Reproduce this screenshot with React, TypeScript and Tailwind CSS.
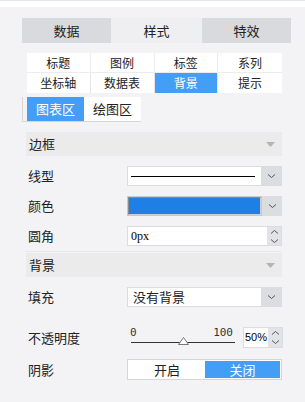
import React from "react";

const cjk = { fontFamily: '"Noto Sans CJK SC", "Noto Sans", sans-serif' };

const Chevron = () => (
    <svg width="9" height="6" viewBox="0 0 9 6" fill="none">
        <path d="M1 1.5 L4.5 4.5 L8 1.5" stroke="#555" strokeWidth="1" />
    </svg>
);

const Spinner = () => (
    <div className="flex flex-col items-center justify-center gap-[3px] w-[14px] h-full bg-[#e2e3e6]">
        <svg width="9" height="6" viewBox="0 0 9 6" fill="none">
            <path d="M1 4.5 L4.5 1.5 L8 4.5" stroke="#555" strokeWidth="1" />
        </svg>
        <svg width="9" height="6" viewBox="0 0 9 6" fill="none">
            <path d="M1 1.5 L4.5 4.5 L8 1.5" stroke="#555" strokeWidth="1" />
        </svg>
    </div>
);

function SectionHeader({ title }: { title: string }) {
    return (
        <div className="ml-[26px] w-[256px] h-[24px] bg-[#ebebec] flex items-center justify-between pl-[3px] pr-[7px]">
            <span className="text-[13px] text-[#222]">{title}</span>
            <svg width="9" height="5" viewBox="0 0 9 5">
                <path d="M0 0 L9 0 L4.5 5 Z" fill="#b4b4b6" />
            </svg>
        </div>
    );
}

function Row({ label, children, className = "" }: { label: string; children: React.ReactNode; className?: string }) {
    return (
        <div className={`flex items-center ml-[28px] ${className}`}>
            <span className="w-[99px] text-[13px] text-[#222]">{label}</span>
            {children}
        </div>
    );
}

function SelectBox({ children }: { children: React.ReactNode }) {
    return (
        <div className="flex w-[155px] h-[20px] border border-[#dcdcdf] bg-white">
            <div className="flex-1 flex items-center overflow-hidden">{children}</div>
            <div className="w-[20px] bg-[#dcdde0] flex items-center justify-center">
                <Chevron />
            </div>
        </div>
    );
}

const subTabs = ["标题", "图例", "标签", "系列", "坐标轴", "数据表", "背景", "提示"];

export default function App() {
    return (
        <div className="w-[305px] h-[402px] bg-[#f3f3f5] overflow-hidden" style={cjk}>
            <div className="h-[7px] bg-white border-t border-[#e2e7ee]" />

            {/* main tabs */}
            <div className="mt-[11px] ml-[22px] w-[269px] h-[25px] flex text-[13px] text-[#222]">
                <div className="w-[89px] bg-[#d9dadd] flex items-center justify-center">数据</div>
                <div className="w-[91px] bg-[#efeff1] flex items-center justify-center">样式</div>
                <div className="w-[89px] bg-[#d9dadd] flex items-center justify-center">特效</div>
            </div>

            {/* sub tabs */}
            <div className="mt-[10px] ml-[27px] w-[255px] grid grid-cols-4 text-[12px] text-[#222]">
                {subTabs.map((t, i) => (
                    <div
                        key={t}
                        className={`h-[20px] flex items-center justify-center ${i % 4 !== 3 ? "border-r border-[#e6e6e8]" : ""} ${
                            i < 4 ? "border-b border-[#ececee]" : ""
                        } ${t === "背景" ? "bg-[#459ef5] text-white" : "bg-white"}`}
                    >
                        {t}
                    </div>
                ))}
            </div>

            {/* area tabs */}
            <div className="mt-[4px] ml-[22px] w-[119px] h-[25px] flex border-l border-b border-[#d6d6d8] pl-[4px] text-[13px]">
                <div className="w-[57px] bg-[#459ef5] text-white flex items-center justify-center">图表区</div>
                <div className="w-[57px] bg-white text-[#222] flex items-center justify-center">绘图区</div>
            </div>

            <div className="mt-[10px]">
                <SectionHeader title="边框" />
            </div>

            <Row label="线型" className="mt-[10px]">
                <SelectBox>
                    <div className="ml-[3px] w-[124px] h-px bg-black" />
                </SelectBox>
            </Row>

            <Row label="颜色" className="mt-[10px]">
                <div className="flex w-[155px] h-[20px] bg-[#dcdde0]">
                    <div className="flex-1 p-px bg-[#c9c9cc]">
                        <div className="w-full h-full bg-[#1e80e6] border border-[#8a8a8c] border-b-[#d0d0d2] border-r-[#d0d0d2]" />
                    </div>
                    <div className="w-[20px] flex items-center justify-center">
                        <Chevron />
                    </div>
                </div>
            </Row>

            <Row label="圆角" className="mt-[10px]">
                <div className="flex w-[155px] h-[20px] border border-[#dcdcdf] bg-white">
                    <div
                        className="flex-1 flex items-center pl-[3px] text-[12px] text-black"
                        style={{ fontFamily: '"Liberation Serif", serif' }}
                    >
                        0px
                    </div>
                    <Spinner />
                </div>
            </Row>

            <div className="mt-[5px] ml-[26px] w-[256px] h-px bg-[#e8e8ea]" />

            <div className="mt-px">
                <SectionHeader title="背景" />
            </div>

            <Row label="填充" className="mt-[10px]">
                <SelectBox>
                    <span className="pl-[5px] text-[13px] text-[#222]">没有背景</span>
                </SelectBox>
            </Row>

            <Row label="不透明度" className="mt-[20px]">
                <div className="flex items-center">
                    <div className="relative w-[108px] h-[21px]">
                        <div
                            className="flex justify-between pl-[3px] pr-[2px] text-[11px] leading-none text-[#333]"
                            style={{ fontFamily: '"DejaVu Sans Mono", monospace' }}
                        >
                            <span>0</span>
                            <span>100</span>
                        </div>
                        <div className="absolute left-[4px] right-0 top-[15px] h-px bg-[#333]" />
                        <svg className="absolute left-[51px] top-[10px]" width="11" height="8" viewBox="0 0 11 8">
                            <path d="M5.5 0.5 L10.5 7.5 L0.5 7.5 Z" fill="#fff" stroke="#777" strokeWidth="1" />
                        </svg>
                    </div>
                    <div className="ml-[8px] flex h-[21px] border border-[#dcdcdf] bg-white">
                        <div className="w-[24px] flex items-center justify-center text-[11px] text-black" style={{ fontFamily: '"Liberation Sans", sans-serif' }}>
                            50%
                        </div>
                        <Spinner />
                    </div>
                </div>
            </Row>

            <Row label="阴影" className="mt-[11px]">
                <div className="flex w-[155px] h-[21px] border border-[#d6d6d8] bg-white p-px text-[13px]">
                    <div className="w-[76px] flex items-center justify-center text-[#222]">开启</div>
                    <div className="flex-1 bg-[#459ef5] text-white flex items-center justify-center">关闭</div>
                </div>
            </Row>
        </div>
    );
}
